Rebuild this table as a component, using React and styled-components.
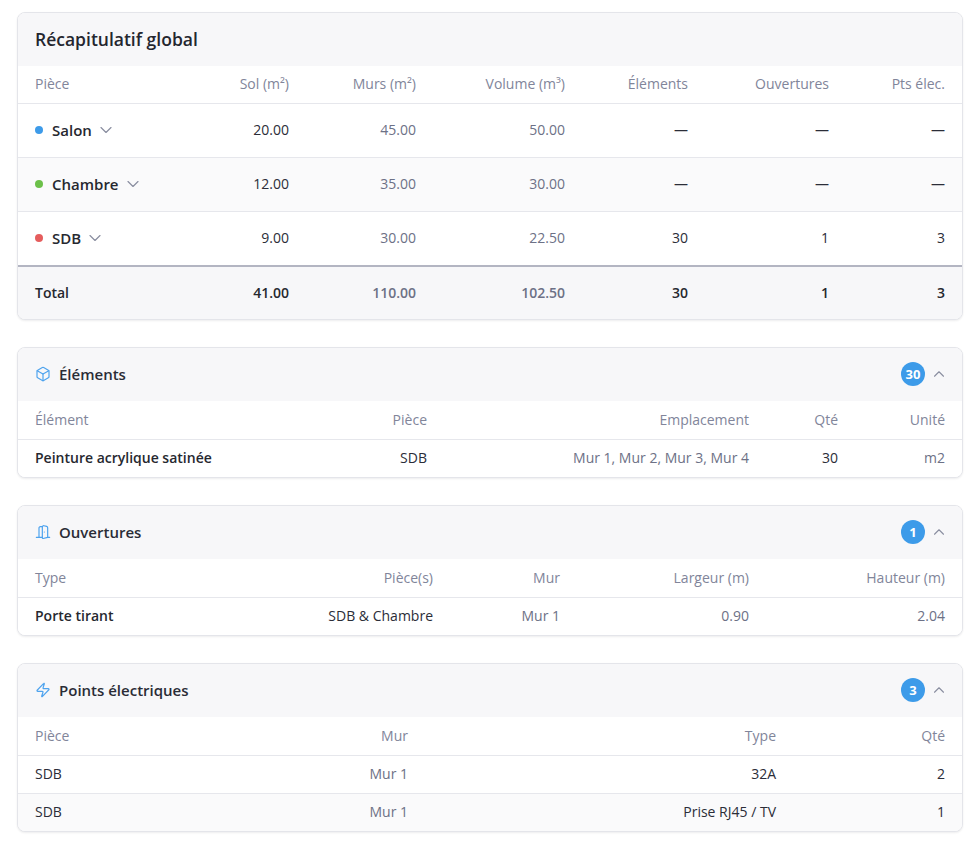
import React from 'react';
import styled, { createGlobalStyle } from 'styled-components';
import { Box, DoorOpen, Zap, ChevronDown, ChevronUp } from 'lucide-react';

const GlobalStyle = createGlobalStyle`
  *, *::before, *::after {
    box-sizing: border-box;
  }
  body {
    margin: 0;
    background: #ffffff;
    font-family: "Open Sans", "Noto Sans", sans-serif;
    color: #2b2d38;
  }
`;

const Page = styled.div`
  display: flex;
  flex-direction: column;
  gap: 27px;
  padding: 12px 11px 16px 17px;
`;

const Card = styled.section`
  border: 1px solid #e4e5ea;
  border-radius: 8px;
  background: #fff;
  overflow: hidden;
  box-shadow: 0 1px 2px rgba(20, 24, 40, 0.08);
`;

const CardHeader = styled.div`
  display: flex;
  align-items: center;
  justify-content: space-between;
  height: 53px;
  padding: 0 14px 1px 17px;
  background: #f7f7f9;
`;

const Title = styled.h2`
  margin: 0;
  font-size: 17.5px;
  font-weight: 600;
  color: #24262f;
`;

const SectionTitle = styled.h3`
  display: flex;
  align-items: center;
  gap: 8px;
  margin: 0;
  font-size: 15px;
  font-weight: 600;
  color: #2a2c36;

  svg {
    color: #4ea3ee;
  }
`;

const HeaderRight = styled.div`
  display: flex;
  align-items: center;
  gap: 5px;
  color: #8a8ea0;
`;

const Badge = styled.span`
  display: inline-flex;
  align-items: center;
  justify-content: center;
  width: 24px;
  height: 24px;
  border-radius: 50%;
  background: #3d9be9;
  color: #fff;
  font-size: 13px;
  font-weight: 700;
`;

const Row = styled.div`
  display: grid;
  grid-template-columns: ${(p) => p.$cols};
  align-items: center;
  height: ${(p) => p.$h}px;
  padding: 0 17px 2px;
  font-size: 14px;
  background: ${(p) => (p.$alt ? '#fafafb' : '#fff')};
  border-top: 1px solid #e6e7ec;
`;

const HeadRow = styled(Row)`
  color: #81859a;
  border-top: none;
`;

const TotalRow = styled(Row)`
  background: #f7f7f9;
  border-top: 2px solid #b3b5c2;
  font-weight: 600;
`;

const Cell = styled.div`
  text-align: ${(p) => (p.$left ? 'left' : 'right')};
  color: ${(p) => (p.$muted ? '#6d7186' : 'inherit')};
  white-space: nowrap;
`;

const Strong = styled(Cell)`
  font-weight: 600;
  color: #26282f;
`;

const Room = styled.div`
  display: flex;
  align-items: center;
  font-size: 15px;
  font-weight: 600;
  color: #26282f;

  svg {
    margin-left: 4px;
    color: #8a8ea0;
  }
`;

const Dot = styled.span`
  width: 8px;
  height: 8px;
  border-radius: 50%;
  background: ${(p) => p.$color};
  margin-right: 9px;
`;

const recapCols = '154px 100px 127px 149px 123px 141px 116px';
const elemCols = '250px 142px 322px 89px 107px';
const ouvCols = '200px 198px 127px 189px 196px';
const ptsCols = '200px 173px 368px 169px';

const rooms = [
  { name: 'Salon', color: '#3d9be9', sol: '20.00', murs: '45.00', vol: '50.00', el: '—', ouv: '—', pts: '—' },
  { name: 'Chambre', color: '#6cc04a', sol: '12.00', murs: '35.00', vol: '30.00', el: '—', ouv: '—', pts: '—' },
  { name: 'SDB', color: '#e55d5d', sol: '9.00', murs: '30.00', vol: '22.50', el: '30', ouv: '1', pts: '3' },
];

const Section = ({ icon, title, count, children }) => (
  <Card>
    <CardHeader>
      <SectionTitle>
        {icon}
        {title}
      </SectionTitle>
      <HeaderRight>
        <Badge>{count}</Badge>
        <ChevronUp size={18} strokeWidth={1.5} />
      </HeaderRight>
    </CardHeader>
    {children}
  </Card>
);

export default function App() {
  return (
    <>
      <GlobalStyle />
      <Page>
        <Card>
          <CardHeader>
            <Title>Récapitulatif global</Title>
          </CardHeader>
          <HeadRow $cols={recapCols} $h={37}>
            <Cell $left>Pièce</Cell>
            <Cell>Sol (m²)</Cell>
            <Cell>Murs (m²)</Cell>
            <Cell>Volume (m³)</Cell>
            <Cell>Éléments</Cell>
            <Cell>Ouvertures</Cell>
            <Cell>Pts élec.</Cell>
          </HeadRow>
          {rooms.map((r, i) => (
            <Row key={r.name} $cols={recapCols} $h={54} $alt={i % 2 === 1}>
              <Room>
                <Dot $color={r.color} />
                {r.name}
                <ChevronDown size={20} strokeWidth={1.4} />
              </Room>
              <Cell>{r.sol}</Cell>
              <Cell $muted>{r.murs}</Cell>
              <Cell $muted>{r.vol}</Cell>
              <Cell>{r.el}</Cell>
              <Cell>{r.ouv}</Cell>
              <Cell>{r.pts}</Cell>
            </Row>
          ))}
          <TotalRow $cols={recapCols} $h={54}>
            <Strong $left>Total</Strong>
            <Strong>41.00</Strong>
            <Cell $muted>110.00</Cell>
            <Cell $muted>102.50</Cell>
            <Strong>30</Strong>
            <Strong>1</Strong>
            <Strong>3</Strong>
          </TotalRow>
        </Card>

        <Section icon={<Box size={16} strokeWidth={1.8} />} title="Éléments" count={30}>
          <HeadRow $cols={elemCols} $h={38}>
            <Cell $left>Élément</Cell>
            <Cell>Pièce</Cell>
            <Cell>Emplacement</Cell>
            <Cell>Qté</Cell>
            <Cell>Unité</Cell>
          </HeadRow>
          <Row $cols={elemCols} $h={38}>
            <Strong $left>Peinture acrylique satinée</Strong>
            <Cell>SDB</Cell>
            <Cell $muted>Mur 1, Mur 2, Mur 3, Mur 4</Cell>
            <Cell>30</Cell>
            <Cell $muted>m2</Cell>
          </Row>
        </Section>

        <Section icon={<DoorOpen size={16} strokeWidth={1.8} />} title="Ouvertures" count={1}>
          <HeadRow $cols={ouvCols} $h={38}>
            <Cell $left>Type</Cell>
            <Cell>Pièce(s)</Cell>
            <Cell>Mur</Cell>
            <Cell>Largeur (m)</Cell>
            <Cell>Hauteur (m)</Cell>
          </HeadRow>
          <Row $cols={ouvCols} $h={38}>
            <Strong $left>Porte tirant</Strong>
            <Cell>SDB &amp; Chambre</Cell>
            <Cell $muted>Mur 1</Cell>
            <Cell $muted>0.90</Cell>
            <Cell $muted>2.04</Cell>
          </Row>
        </Section>

        <Section icon={<Zap size={16} strokeWidth={1.8} />} title="Points électriques" count={3}>
          <HeadRow $cols={ptsCols} $h={38}>
            <Cell $left>Pièce</Cell>
            <Cell>Mur</Cell>
            <Cell>Type</Cell>
            <Cell>Qté</Cell>
          </HeadRow>
          <Row $cols={ptsCols} $h={38}>
            <Cell $left>SDB</Cell>
            <Cell $muted>Mur 1</Cell>
            <Cell>32A</Cell>
            <Cell>2</Cell>
          </Row>
          <Row $cols={ptsCols} $h={38} $alt>
            <Cell $left>SDB</Cell>
            <Cell $muted>Mur 1</Cell>
            <Cell>Prise RJ45 / TV</Cell>
            <Cell>1</Cell>
          </Row>
        </Section>
      </Page>
    </>
  );
}
